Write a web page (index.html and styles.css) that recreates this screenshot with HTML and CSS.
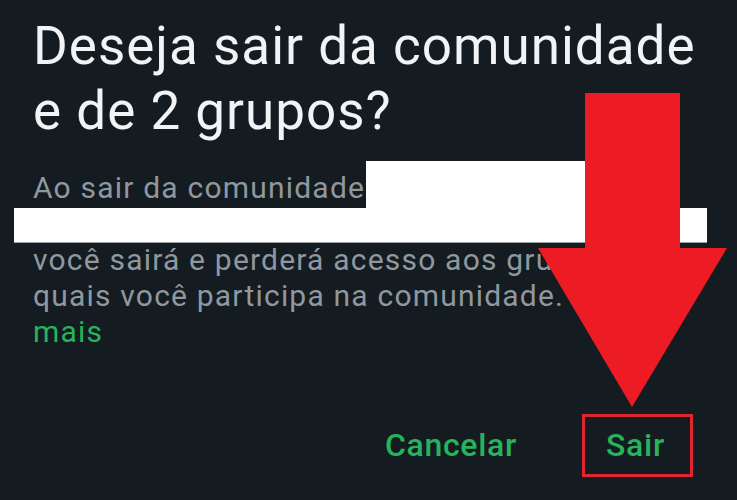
FILE: index.html
```html
<!DOCTYPE html>
<html lang="pt-BR">
<head>
    <meta charset="UTF-8">
    <meta name="viewport" content="width=device-width, initial-scale=1.0">
    <title>Sair da comunidade</title>
    <link rel="stylesheet" href="styles.css">
</head>
<body>
    <div class="dialog">
        <h1 class="dialog-title">Deseja sair da comunidade<br>e de 2 grupos?</h1>
        <p class="dialog-text">
            Ao sair da comunidade<br>
            &nbsp;<br>
            você sairá e perderá acesso aos grupos dos<br>
            quais você participa na comunidade. <a href="#" class="learn-more">Saiba<br>mais</a>
        </p>
        <div class="actions">
            <button class="action-btn">Cancelar</button>
            <button class="action-btn action-exit">Sair</button>
        </div>

        <!-- tarjas brancas escondendo o nome -->
        <div class="redact redact-top"></div>
        <div class="redact redact-line"></div>

        <!-- seta vermelha apontando para o botão -->
        <svg class="arrow" width="737" height="500" viewBox="0 0 737 500">
            <rect x="585" y="93" width="95" height="156" fill="#ed1c24"/>
            <polygon points="538,248 727,248 632,407" fill="#ed1c24"/>
        </svg>
    </div>
</body>
</html>
```

FILE: styles.css
```css
html, body {
    margin: 0;
    padding: 0;
}
body {
    background-color: #141b21;
    font-family: 'Roboto', 'Liberation Sans', sans-serif;
    width: 737px;
    height: 500px;
    overflow: hidden;
}
.dialog {
    position: relative;
    height: 500px;
    padding: 14px 0 0 33px;
    box-sizing: border-box;
}
.dialog-title {
    margin: 0;
    font-size: 53px;
    font-weight: 400;
    line-height: 65px;
    letter-spacing: 1px;
    color: #f1f3f4;
    white-space: nowrap;
}
.dialog-text {
    margin: 26px 0 0 0;
    font-size: 30px;
    line-height: 36px;
    letter-spacing: 1.2px;
    color: #8f989e;
    white-space: nowrap;
}
.learn-more {
    color: #27b35c;
    text-decoration: none;
}
.actions {
    display: flex;
    justify-content: flex-end;
    align-items: center;
    gap: 65px;
    margin-top: 64px;
    padding-right: 44px;
}
.action-btn {
    background: none;
    border: none;
    padding: 0;
    height: 63px;
    font-family: 'Roboto', 'Liberation Sans', sans-serif;
    font-size: 32px;
    font-weight: 500;
    letter-spacing: 0.7px;
    color: #27b35c;
    line-height: 57px;
    cursor: pointer;
}
.action-exit {
    box-sizing: border-box;
    width: 111px;
    padding: 0 4px 0 0;
    border: 3px solid #e1252c;
}
.redact {
    position: absolute;
    background-color: #fff;
}
.redact-top {
    left: 366px;
    top: 161px;
    width: 240px;
    height: 48px;
}
.redact-line {
    left: 14px;
    top: 208px;
    width: 693px;
    height: 34px;
    border-bottom: 1px solid #9aa0a4;
}
.arrow {
    position: absolute;
    left: 0;
    top: 0;
}
```
